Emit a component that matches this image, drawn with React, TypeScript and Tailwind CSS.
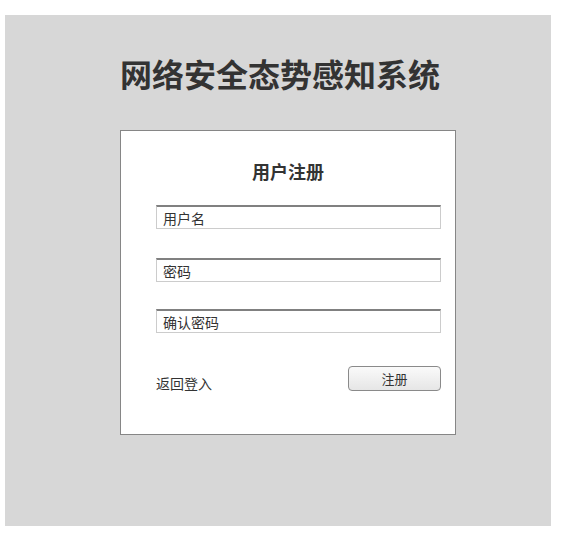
export default function App() {
  const font = { fontFamily: '"Noto Sans CJK SC", "Noto Sans", sans-serif' };
  return (
    <div className="w-[562px] h-[536px] bg-white pt-[15px] pl-[5px]" style={font}>
      <div className="w-[546px] h-[511px] bg-[#d7d7d7] flex flex-col text-[#333333]">
        <h1 className="pt-[38px] pl-[4px] text-center text-[32px] leading-[40px] font-bold">
          网络安全态势感知系统
        </h1>
        <div className="mt-[37px] ml-[115px] w-[336px] h-[305px] bg-white border border-[#868686] flex flex-col">
          <h2 className="pt-[28px] text-center text-[18px] leading-[24px] font-bold">
            用户注册
          </h2>
          <form className="flex flex-col pl-[35px]" onSubmit={(e) => e.preventDefault()}>
            <input
              className="mt-[22px] w-[285px] h-[24px] px-[6px] text-[14px] border border-[#cccccc] border-t-2 border-t-[#808080] outline-none placeholder:text-[#333333]"
              type="text"
              placeholder="用户名"
            />
            <input
              className="mt-[29px] w-[285px] h-[24px] px-[6px] text-[14px] border border-[#cccccc] border-t-2 border-t-[#808080] outline-none placeholder:text-[#333333]"
              type="password"
              placeholder="密码"
            />
            <input
              className="mt-[27px] w-[285px] h-[24px] px-[6px] text-[14px] border border-[#cccccc] border-t-2 border-t-[#808080] outline-none placeholder:text-[#333333]"
              type="password"
              placeholder="确认密码"
            />
            <div className="mt-[33px] w-[285px] flex items-end justify-between">
              <a className="text-[14px] leading-[16px] cursor-pointer">返回登入</a>
              <button
                type="submit"
                className="w-[93px] h-[25px] rounded-[4px] border border-[#8a8a8a] bg-linear-to-b from-[#fafafa] to-[#e6e6e6] text-[13px] leading-[20px] text-[#333333]"
              >
                注册
              </button>
            </div>
          </form>
        </div>
      </div>
    </div>
  );
}
